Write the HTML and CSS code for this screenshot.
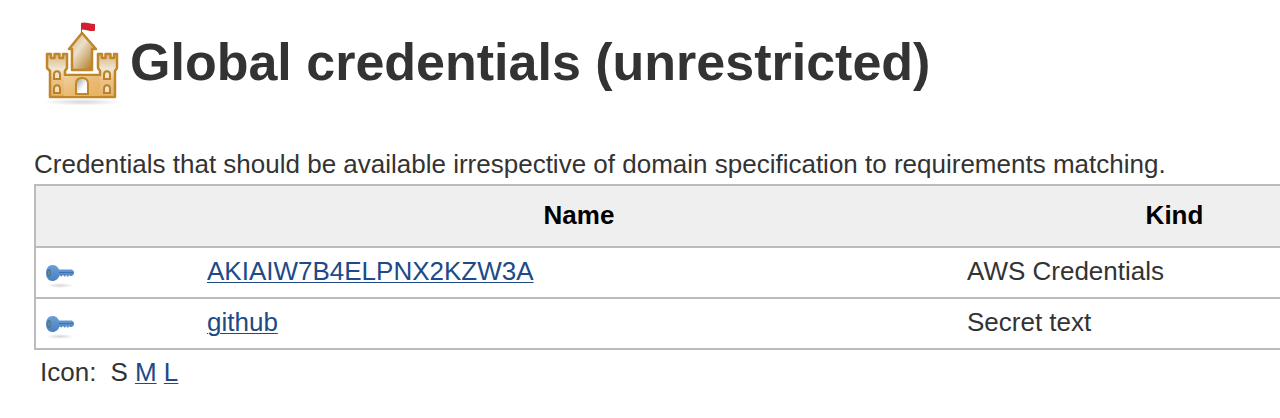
FILE: index.html
```html
<!DOCTYPE html>
<html lang="en">
<head>
<meta charset="utf-8">
<title>Global credentials (unrestricted)</title>
<link rel="stylesheet" href="styles.css">
</head>
<body>
<svg class="defs" aria-hidden="true">
  <defs>
    <linearGradient id="stone" x1="0" y1="0" x2="1" y2="1">
      <stop offset="0" stop-color="#efcf9c"/><stop offset=".5" stop-color="#eabb74"/><stop offset="1" stop-color="#e7b260"/>
    </linearGradient>
    <linearGradient id="tower" x1="0" y1="0" x2="1" y2="1">
      <stop offset="0" stop-color="#cfa96a"/><stop offset=".4" stop-color="#ecdfca"/><stop offset="1" stop-color="#a86c08"/>
    </linearGradient>
    <linearGradient id="turret" x1="0" y1="0" x2="0" y2="1">
      <stop offset="0" stop-color="#d9b67a"/><stop offset=".35" stop-color="#f0e5d5"/><stop offset=".6" stop-color="#ecc285"/><stop offset="1" stop-color="#e8b465"/>
    </linearGradient>
    <linearGradient id="gate" x1="0" y1="0" x2="1" y2="1">
      <stop offset="0" stop-color="#999"/><stop offset=".6" stop-color="#fff"/>
    </linearGradient>
    <linearGradient id="steel" x1="0" y1="0" x2="0" y2="1">
      <stop offset="0" stop-color="#6c9fd6"/><stop offset="1" stop-color="#4a80c0"/>
    </linearGradient>
    <radialGradient id="shade">
      <stop offset="0" stop-color="#000" stop-opacity=".16"/><stop offset="1" stop-color="#000" stop-opacity="0"/>
    </radialGradient>
    <symbol id="key" viewBox="0 0 32 32">
      <ellipse cx="16" cy="28.500" rx="14" ry="2.500" fill="url(#shade)"/>
      <path d="M8.500 8c3 0 5.500 2 6.500 4.500h13l2 2v2.500l-2 2h-2l-1-1-1 2-2-2-1 2-2-2-1.500 1.500-2-1c-1 3-3.500 5.500-7 5.500-4 0-6.500-3.500-6.500-8s2.500-8 6.500-8z" fill="url(#steel)"/>
      <path d="M15 15.500h14" stroke="#3c72b3"/>
      <ellipse cx="5" cy="16" rx="2" ry="4" fill="#4b769c"/>
      <path d="M5 14v4" stroke="#7f9488"/>
    </symbol>
  </defs>
</svg>
<main class="page">
  <h1 class="title">
    <svg class="castle" viewBox="0 0 96 96" aria-hidden="true">
      <ellipse cx="48" cy="88" rx="40" ry="3.500" fill="url(#shade)"/>
      <g stroke="#bf862b" stroke-width="2.500" stroke-linejoin="round">
        <path d="M38 56V35h-3l13-16 14 16h-4v21z" fill="url(#tower)"/>
        <path d="M16 83V57l-3-3V40h4v4h3.500v-4h5v4H29v-4h4v14l-2 3v4h35v-4l-2-3V40h4v4h3.500v-4h5v4H80v-4h3v14l-2 3v26z" fill="url(#turret)"/>
      </g>
      <path d="M30 62h36v20H30z" fill="url(#stone)"/>
      <path d="M42 80V70c0-4 2-6 6-6s6 2 6 6v10z" fill="url(#gate)" stroke="#bf872b" stroke-width="2"/>
      <g fill="#f2e3c8" stroke="#b8812a" stroke-width="2">
        <path d="M20 65v-4c0-5 6-5 6 0v4z"/><path d="M20 79v-4c0-5 6-5 6 0v4z"/>
        <path d="M70 65v-4c0-5 6-5 6 0v4z"/><path d="M70 79v-4c0-5 6-5 6 0v4z"/>
      </g>
      <path d="M47.500 19V9" stroke="#a5653c"/>
      <path d="M47 9q3-1 7 0t7 1v6.500q-3 1-7 0t-7-1z" fill="#d31f30"/>
    </svg>
    <span>Global credentials (unrestricted)</span>
  </h1>
  <p class="description">Credentials that should be available irrespective of domain specification to requirements matching.</p>
  <div class="table-area">
    <table class="credentials">
      <colgroup><col class="col-icon"><col class="col-name"><col></colgroup>
      <thead><tr><th></th><th>Name</th><th>Kind</th></tr></thead>
      <tbody>
        <tr>
          <td class="icon-cell"><svg class="key" aria-hidden="true"><use href="#key"/></svg></td>
          <td><a href="#">AKIAIW7B4ELPNX2KZW3A</a></td>
          <td>AWS Credentials</td>
        </tr>
        <tr>
          <td class="icon-cell"><svg class="key" aria-hidden="true"><use href="#key"/></svg></td>
          <td><a href="#">github</a></td>
          <td>Secret text</td>
        </tr>
      </tbody>
    </table>
  </div>
  <div class="sizes"><span class="sizes-label">Icon:</span><span>S <a href="#">M</a> <a href="#">L</a></span></div>
</main>
</body>
</html>
```
FILE: styles.css
```css
body {
  margin: 0;
  background: #fff;
  color: #333;
  font: 26px/30px "Liberation Sans", Arial, sans-serif;
}
a {
  color: #204a87;
  text-decoration-thickness: 1px;
  text-underline-offset: 2px;
}
.defs {
  position: absolute;
  width: 0;
  height: 0;
}
.page {
  padding: 14px 0 0 34px;
  overflow: hidden;
}
.title {
  display: flex;
  align-items: center;
  margin: 0 0 39px;
  font-size: 52px;
  line-height: 96px;
}
.castle {
  flex: none;
  width: 96px;
  height: 96px;
}
.description {
  margin: 0 0 5px;
  white-space: nowrap;
}
.table-area {
  overflow: hidden;
}
.credentials {
  width: calc(100% + 112px);
  table-layout: fixed;
  border-collapse: collapse;
  border: 2px solid #bbb;
}
.col-icon {
  width: 164px;
}
.col-name {
  width: 760px;
}
.credentials th {
  padding: 14px 8px 16px;
  height: 30px;
  background: #efefef;
  color: #000;
}
.credentials td {
  padding: 6px 8px 10px;
  height: 33px;
  border-top: 2px solid #bbb;
}
.credentials .icon-cell {
  padding: 0 8px;
}
.key {
  display: block;
  width: 32px;
  height: 32px;
}
.sizes {
  display: flex;
  gap: 14px;
  padding: 7px 6px;
}
```
